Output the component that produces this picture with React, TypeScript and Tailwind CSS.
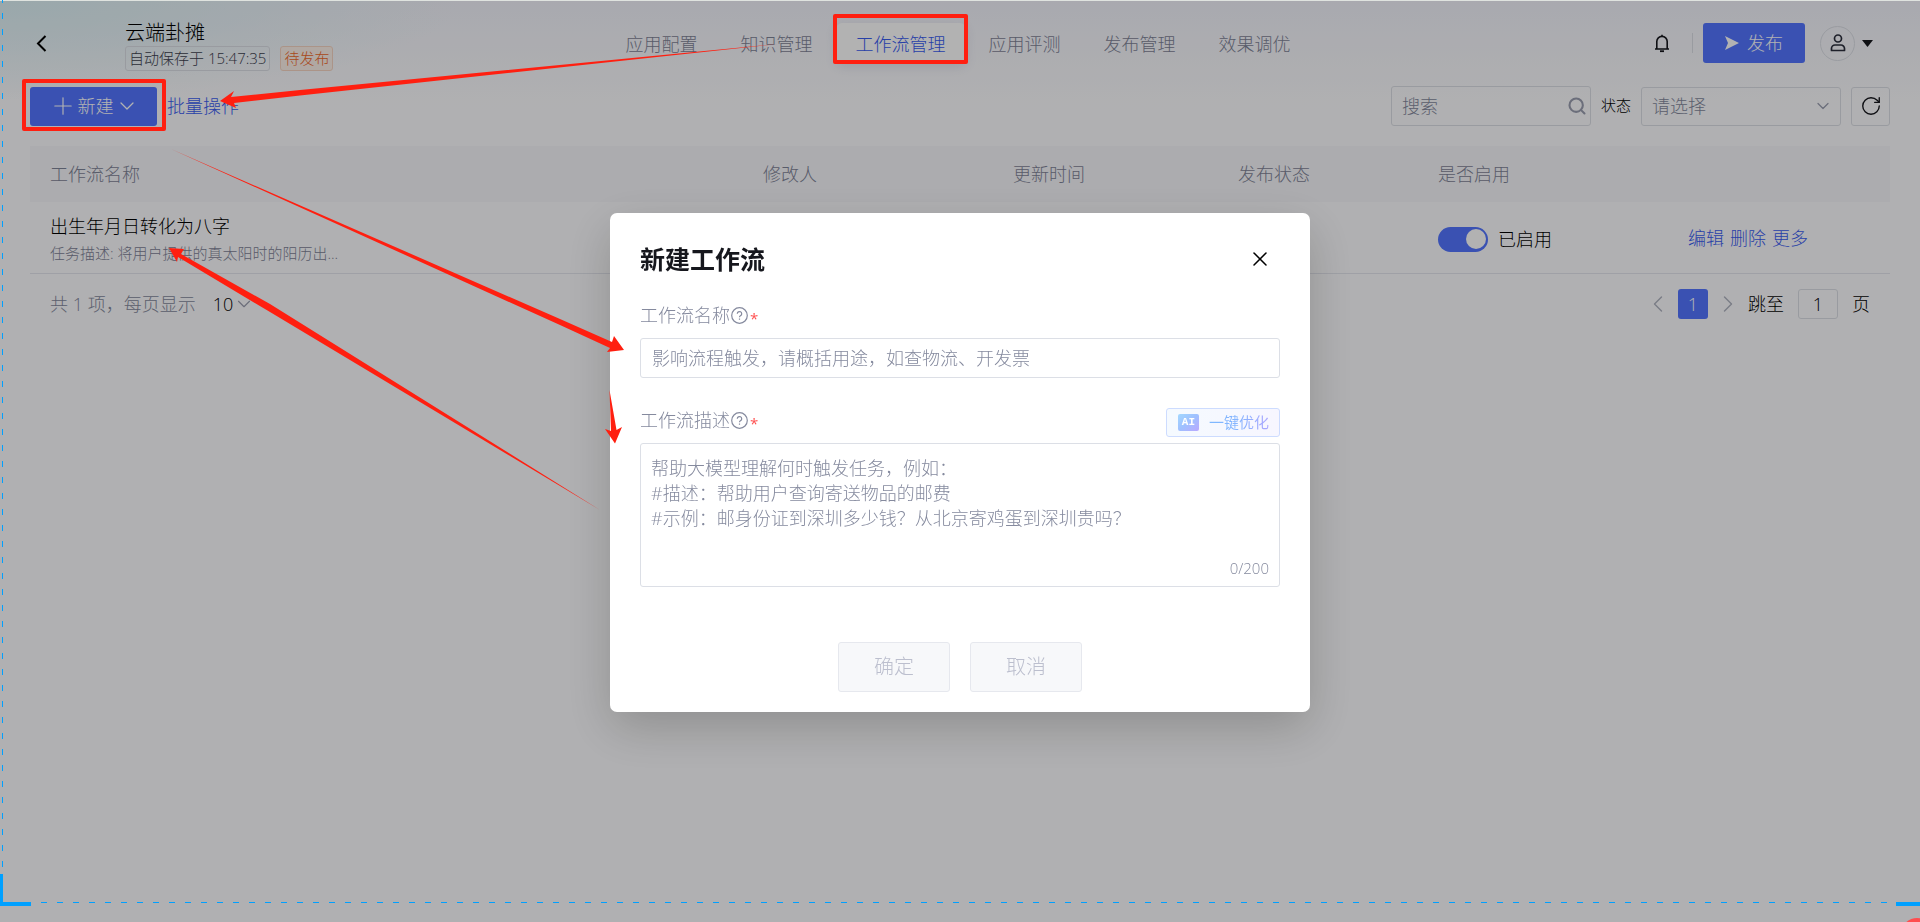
import { useState, type ReactNode } from "react";
import { ChevronDown, ChevronLeft, ChevronRight, Plus, RotateCw, Search, X } from "lucide-react";

const NAV_ITEMS = ["应用配置", "知识管理", "工作流管理", "应用评测", "发布管理", "效果调优"];

const COLUMNS = [
  { title: "工作流名称", width: "w-[713px]" },
  { title: "修改人", width: "w-[250px]" },
  { title: "更新时间", width: "w-[225px]" },
  { title: "发布状态", width: "w-[200px]" },
  { title: "是否启用", width: "w-[250px]" },
  { title: "", width: "w-[222px]" },
];

function Header() {
  return (
    <header className="flex h-[86px] items-start px-[30px]">
      <div className="flex flex-1 items-start">
        <button aria-label="返回" className="mt-[32px] text-black">
          <svg width="24" height="24" viewBox="0 0 24 24" fill="none" stroke="currentColor" strokeWidth="2">
            <path d="M15.5 4 8 11.5l7.5 7.5" />
          </svg>
        </button>
        <div className="ml-[71px] pt-5">
          <h1 className="text-xl leading-[26px] text-black">云端卦摊</h1>
          <div className="flex gap-[10px] text-[15px] leading-[23px]">
            <span className="rounded-[3px] border border-[#dcdfe6] px-[3px] text-[#3c404e]">自动保存于 15:47:35</span>
            <span className="rounded-[3px] border border-[#f5d5c3] bg-[#fdf1ea] px-[3px] text-[#f0692a]">待发布</span>
          </div>
        </div>
      </div>
      <nav className="flex gap-[3px] pt-[23px]">
        {NAV_ITEMS.map((item) => (
          <a
            key={item}
            href="#"
            className={
              item === "工作流管理"
                ? "h-10 rounded-md bg-white px-5 leading-[42px] text-[#3a5cf0] shadow-[0_4px_12px_rgba(60,60,90,0.12)]"
                : "h-10 px-5 leading-[42px] text-[#7f8498]"
            }
          >
            {item}
          </a>
        ))}
      </nav>
      <div className="mt-[23px] flex h-10 flex-1 items-center justify-end pr-1">
        <button aria-label="通知" className="text-[#16171d]">
          <svg width="18" height="20" viewBox="0 0 18 20" fill="none" stroke="currentColor" strokeWidth="1.6">
            <path d="M2 16h14M3.800 16V8.600a5.200 5.200 0 0 1 10.400 0V16M9 3.400V1.800" />
            <path d="M7 18.200h4" strokeWidth="1.800" />
          </svg>
        </button>
        <span className="ml-[21px] h-5 w-px bg-[#dcdfe6]" />
        <button className="ml-[10px] flex h-10 w-[102px] items-center justify-center gap-2 rounded-[3px] bg-[#5375ff] text-white">
          <svg width="14" height="16" viewBox="0 0 14 16" fill="currentColor">
            <path d="M0 1 14 8 0 15l3-7z" />
          </svg>
          发布
        </button>
        <button aria-label="账号" className="ml-[15px] mr-[13px] flex items-center gap-[7px]">
          <span className="grid h-[35px] w-[35px] place-items-center rounded-full border border-[#dcdfe6] text-[#2b2f3d]">
            <svg width="16" height="18" viewBox="0 0 16 18" fill="none" stroke="currentColor" strokeWidth="1.700">
              <circle cx="8" cy="4.500" r="3.500" />
              <path d="M1.500 16.500v-2a3.500 3.500 0 0 1 3.500-3.500h6a3.500 3.500 0 0 1 3.500 3.500v2z" strokeLinejoin="round" />
            </svg>
          </span>
          <svg width="11" height="7" viewBox="0 0 11 7" fill="#16171d">
            <path d="M0 0h11L5.500 7z" />
          </svg>
        </button>
      </div>
    </header>
  );
}

function Toolbar() {
  return (
    <div className="flex h-10 items-center px-[30px]">
      <button className="flex h-[39px] w-[127px] items-center justify-center gap-px rounded-[3px] bg-[#5375ff] text-white">
        <Plus className="h-7 w-7" strokeWidth={1} />
        新建
        <ChevronDown className="h-6 w-6" strokeWidth={1.25} />
      </button>
      <button className="ml-[10px] text-[#3a5cf0]">批量操作</button>
      <div className="ml-auto flex h-10 w-[200px] items-center rounded-[3px] border border-[#dcdfe6] pl-[10px] pr-[3px]">
        <input aria-label="搜索" placeholder="搜索" className="w-full min-w-0 outline-none placeholder:text-[#858a9e]" />
        <Search className="h-5 w-5 shrink-0 text-[#9a9eb0]" strokeWidth={2.5} />
      </div>
      <label htmlFor="status" className="ml-[10px] text-[15px] text-black">
        状态
      </label>
      <div className="relative ml-[10px]">
        <select
          id="status"
          defaultValue=""
          className="h-[39px] w-[200px] appearance-none rounded-[3px] border border-[#dcdfe6] bg-transparent pl-[10px] text-[#858a9e]"
        >
          <option value="">请选择</option>
        </select>
        <ChevronDown className="pointer-events-none absolute right-2 top-[9px] h-5 w-5 text-[#9a9eb0]" strokeWidth={1.5} />
      </div>
      <button
        aria-label="刷新"
        className="ml-[10px] grid h-[39px] w-[39px] place-items-center rounded-[3px] border border-[#dcdfe6] text-[#16171d]"
      >
        <RotateCw className="h-[22px] w-[22px]" strokeWidth={1.5} />
      </button>
    </div>
  );
}

function WorkflowTable() {
  const [enabled, setEnabled] = useState(true);
  return (
    <table className="mt-5 w-full table-fixed border-collapse text-left">
      <thead className="bg-[#f7f7fb] text-[#7f8498]">
        <tr className="h-[56px]">
          {COLUMNS.map((col, i) => (
            <th key={i} className={`${col.width} px-5 font-light`}>
              {col.title}
            </th>
          ))}
        </tr>
      </thead>
      <tbody>
        <tr className="h-[71px] border-b border-[#e4e6ee]">
          <td className="px-5 pt-1">
            <p className="leading-[27px] text-black">出生年月日转化为八字</p>
            <p className="text-[15px] leading-[26px] text-[#7f8498]">任务描述: 将用户提供的真太阳时的阳历出...</p>
          </td>
          <td className="px-5">--</td>
          <td className="px-5">--</td>
          <td className="px-5">--</td>
          <td className="px-5 pt-1">
            <label className="flex items-center gap-[10px] text-black">
              <input
                type="checkbox"
                role="switch"
                checked={enabled}
                onChange={(e) => setEnabled(e.target.checked)}
                className="peer sr-only"
              />
              <span className="flex h-[25px] w-[50px] items-center rounded-full bg-[#c9cdd8] px-[2px] peer-checked:justify-end peer-checked:bg-[#5375ff]">
                <span className="h-5 w-5 rounded-full bg-white" />
              </span>
              已启用
            </label>
          </td>
          <td className="px-5 pt-px">
            <div className="flex gap-[6px] text-[#3a5cf0]">
              <a href="#">编辑</a>
              <a href="#">删除</a>
              <a href="#">更多</a>
            </div>
          </td>
        </tr>
      </tbody>
    </table>
  );
}

function Pagination() {
  return (
    <div className="mt-[15px] flex h-[30px] items-center px-5 text-black">
      <span className="text-[#858a9e]">共 1 项，每页显示</span>
      <button className="ml-[17px] flex items-center">
        10
        <ChevronDown className="h-[22px] w-[22px] text-[#9a9eb0]" strokeWidth={1.25} />
      </button>
      <button aria-label="上一页" className="ml-auto text-[#b0b4c2]">
        <ChevronLeft className="h-7 w-7" strokeWidth={1.25} />
      </button>
      <button className="ml-[6px] h-[30px] w-[30px] rounded-[3px] bg-[#5375ff] text-white">1</button>
      <button aria-label="下一页" className="ml-[6px] text-[#b0b4c2]">
        <ChevronRight className="h-7 w-7" strokeWidth={1.25} />
      </button>
      <label className="ml-[6px] flex items-center">
        跳至
        <input
          defaultValue="1"
          className="mx-[14px] h-[30px] w-10 rounded-[3px] border border-[#dcdfe6] text-center"
        />
        页
      </label>
    </div>
  );
}

function FieldLabel({ htmlFor, children }: { htmlFor: string; children: ReactNode }) {
  return (
    <label htmlFor={htmlFor} className="flex items-center leading-6 text-[#858a9e]">
      {children}
      <svg className="ml-px" width="17" height="17" viewBox="0 0 17 17" fill="none" stroke="currentColor" strokeWidth="1.200">
        <circle cx="8.500" cy="8.500" r="7.800" />
        <path d="M6.300 6.800a2.200 2.200 0 1 1 3.400 1.800c-.8.500-1.200.9-1.200 1.700M8.500 11.600v1.200" />
      </svg>
      <span className="ml-[2px] pt-[6px] text-[15px] font-normal leading-[18px] text-[#ff5050]">*</span>
    </label>
  );
}

function CreateDialog() {
  return (
    <div className="fixed inset-0 flex items-start justify-center bg-black/30 pt-[213px]">
      <div
        role="dialog"
        aria-labelledby="dialog-title"
        className="w-[700px] rounded-[7px] bg-white px-[30px] pb-5 pt-7 shadow-[0_16px_48px_rgba(0,0,0,0.2)]"
      >
        <div className="flex h-9 items-center justify-between">
          <h2 id="dialog-title" className="text-[25px] font-bold text-[#16171d]">
            新建工作流
          </h2>
          <button aria-label="关闭" className="mr-2 text-black">
            <X className="h-6 w-6" strokeWidth={1.5} />
          </button>
        </div>

        <div className="mt-[26px]">
          <FieldLabel htmlFor="name">工作流名称</FieldLabel>
          <input
            id="name"
            placeholder="影响流程触发，请概括用途，如查物流、开发票"
            className="mt-[11px] h-10 w-full rounded-[3px] border border-[#dcdfe6] px-[11px] outline-none placeholder:text-[#858a9e]"
          />
        </div>

        <div className="mt-[30px]">
          <div className="flex items-start justify-between">
            <FieldLabel htmlFor="desc">工作流描述</FieldLabel>
            <button className="flex h-[29px] items-center gap-[10px] rounded-[3px] border border-[#cddcff] bg-gradient-to-r from-[#f5faff] to-[#f7f6ff] pl-[11px] pr-[10px]">
              <span className="rounded-[2px] bg-gradient-to-br from-[#a3d8ff] via-[#9fc0ff] to-[#b9a8ff] px-1 font-['Liberation_Mono'] text-[11px] font-bold leading-[17px] text-white">
                AI
              </span>
              <span className="bg-gradient-to-r from-[#7db8ff] via-[#86b4ff] to-[#aaa6ff] bg-clip-text text-[15px] font-normal text-transparent">
                一键优化
              </span>
            </button>
          </div>
          <div className="mt-[6px] flex flex-col rounded-[3px] border border-[#dcdfe6] px-[10px] pb-[6px] pt-3">
            <textarea
              id="desc"
              rows={4}
              placeholder={"帮助大模型理解何时触发任务，例如：\n#描述：帮助用户查询寄送物品的邮费\n#示例：邮身份证到深圳多少钱？从北京寄鸡蛋到深圳贵吗？"}
              className="resize-none leading-[25px] outline-none placeholder:text-[#858a9e]"
            />
            <span className="self-end text-[15px] leading-6 text-[#858a9e]">0/200</span>
          </div>
        </div>

        <div className="mt-[55px] flex justify-center gap-5 text-xl text-[#bcbfce]">
          <button className="h-[50px] w-[112px] rounded-[3px] border border-[#e6e8ee] bg-[#f7f8fa]">确定</button>
          <button className="h-[50px] w-[112px] rounded-[3px] border border-[#e6e8ee] bg-[#f7f8fa]">取消</button>
        </div>
      </div>
    </div>
  );
}

// Hand-placed arrows, boxes and the capture frame over the page
function Annotations() {
  return (
    <svg className="pointer-events-none absolute left-0 top-0" width="1920" height="922" viewBox="0 0 1920 922">
      <rect width="1920" height="1" fill="#dfe3df" />
      <g fill="none" stroke="#ff1f10" strokeWidth="4" strokeLinejoin="round">
        <rect x="835" y="16" width="131" height="46" />
        <rect x="24" y="81" width="140" height="48" />
      </g>
      <g fill="#ff1f10">
        <path d="M778 44 300 90 231 97 234 91 220 101 236 108 234 103 300 95.500z" />
        <path d="M171 149 560 319 612 342 614 336 624 350 607 352 610 348 560 325z" />
        <path d="M600 510 270 304 181 254 184 249 169 248 177 262 178 257 270 312z" />
        <path d="M609.500 390 616.500 430 622 427 615 443.500 605 429 611 431z" />
      </g>
      <g fill="none" stroke="#00a0ff">
        <path d="M2.500 -3V874" strokeDasharray="6 10" />
        <path d="M41 902.500H1896" strokeDasharray="6 10" />
      </g>
      <path d="M0 874h3v28h28v4H0zM1896 902h24v4h-24z" fill="#00a0ff" />
      <circle cx="1917" cy="934" r="16" fill="#ff4d4f" />
    </svg>
  );
}

export default function App() {
  return (
    <div className="relative min-h-screen overflow-hidden bg-[#fdfdff] font-['Open_Sans','Noto_Sans_CJK_SC',sans-serif] text-lg font-light">
      <div className="bg-[radial-gradient(ellipse_460px_100px_at_0_0,#dcf1f5,transparent),linear-gradient(to_bottom,#f2f3fb,#fdfdff_110px)]">
        <Header />
        <Toolbar />
      </div>
      <main className="px-[30px]">
        <WorkflowTable />
        <Pagination />
      </main>
      <CreateDialog />
      <Annotations />
    </div>
  );
}
